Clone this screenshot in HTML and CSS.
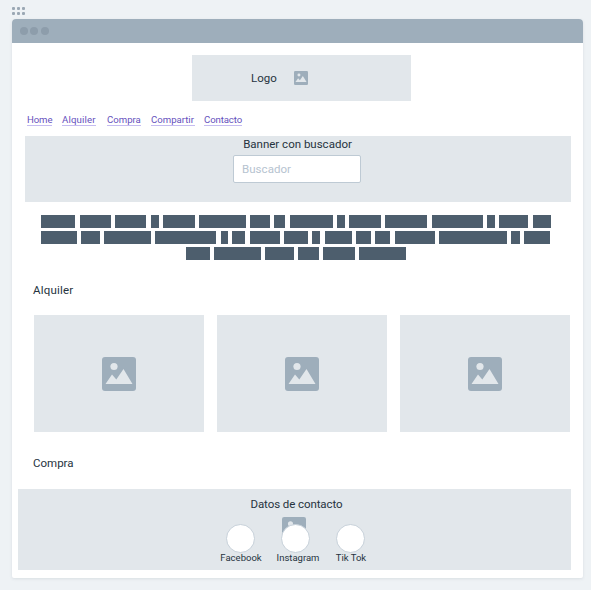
FILE: index.html
```html
<!DOCTYPE html>
<html lang="es">
<head>
<meta charset="utf-8">
<title>Wireframe</title>
<link rel="stylesheet" href="styles.css">
</head>
<body>
<svg class="defs" width="0" height="0" aria-hidden="true">
  <symbol id="picture" viewBox="0 0 34 34">
    <rect width="34" height="34" rx="3" fill="#9eaebb"/>
    <circle cx="12" cy="9.5" r="3.6" fill="#e2e7eb"/>
    <path d="M3.5 27 10 17.5l4.3 5L21.500 12 30.500 27z" fill="#e2e7eb"/>
  </symbol>
</svg>
<div class="grip"><i></i><i></i><i></i><i></i><i></i><i></i></div>
<main class="window">
  <header class="titlebar"><i></i><i></i><i></i></header>
  <section class="logo"><span>Logo</span><svg class="logo-icon"><use href="#picture"/></svg></section>
  <nav class="nav"><a class="home">Home</a><a class="rent">Alquiler</a><a class="buy">Compra</a><a class="share">Compartir</a><a class="reach">Contacto</a></nav>
  <section class="banner">
    <h1>Banner con buscador</h1>
    <div class="search">Buscador</div>
  </section>
  <section class="copy">
    <div class="line"><i style="width:34px"></i><i style="width:31px"></i><i style="width:31.5px"></i><i style="width:8px"></i><i style="width:32px"></i><i style="width:46.5px"></i><i style="width:20px"></i><i style="width:11px"></i><i style="width:43px"></i><i style="width:8px"></i><i style="width:31.5px"></i><i style="width:42px"></i><i style="width:51px"></i><i style="width:8px"></i><i style="width:29px"></i><i style="width:18px"></i></div>
    <div class="line"><i style="width:36px"></i><i style="width:18.3px"></i><i style="width:46.7px"></i><i style="width:61.3px"></i><i style="width:7.7px"></i><i style="width:13px"></i><i style="width:30.3px"></i><i style="width:23.7px"></i><i style="width:8px"></i><i style="width:27.7px"></i><i style="width:14.7px"></i><i style="width:15px"></i><i style="width:40.3px"></i><i style="width:67.7px"></i><i style="width:8.3px"></i><i style="width:26.7px"></i></div>
    <div class="line last"><i style="width:24px"></i><i style="width:46.3px"></i><i style="width:29px"></i><i style="width:21px"></i><i style="width:31.7px"></i><i style="width:47px"></i></div>
  </section>
  <h2 class="rent-title">Alquiler</h2>
  <section class="cards">
    <div class="card"><svg><use href="#picture"/></svg></div>
    <div class="card"><svg><use href="#picture"/></svg></div>
    <div class="card"><svg><use href="#picture"/></svg></div>
  </section>
  <h2 class="buy-title">Compra</h2>
  <footer class="contact">
    <h3>Datos de contacto</h3>
    <svg class="contact-icon"><use href="#picture"/></svg>
    <div class="socials">
      <div class="social"><i></i><span class="fb">Facebook</span></div>
      <div class="social"><i></i><span class="ig">Instagram</span></div>
      <div class="social"><i></i><span class="tt">Tik Tok</span></div>
    </div>
  </footer>
</main>
</body>
</html>
```
FILE: styles.css
```css
* { box-sizing: border-box; }
body {
  margin: 0;
  height: 590px;
  overflow: hidden;
  background: #eef2f5;
  color: #263340;
  font-family: Roboto, "Liberation Sans", sans-serif;
  font-size: 11.5px;
  padding-top: 7px;
}
h1, h2, h3 { margin: 0; font-size: 11.5px; font-weight: 400; line-height: 16px; }
svg { display: block; }
.defs { position: absolute; }
.grip {
  display: grid;
  grid-template-columns: repeat(3, 3px);
  gap: 2px;
  width: 13px;
  height: 8px;
  margin-left: 12px;
}
.grip i { width: 3px; height: 3px; border-radius: 1px; background: #9ba8b4; }
.window {
  width: 571.5px;
  height: 559px;
  margin: 4px 0 0 11.5px;
  background: #fff;
  border-radius: 4px 4px 2px 2px;
  box-shadow: 0 1px 3px rgba(70, 90, 110, .12);
}
.titlebar {
  display: flex;
  align-items: center;
  gap: 2.500px;
  height: 24px;
  padding-left: 8px;
  background: #9eaebb;
  border-radius: 4px 4px 0 0;
}
.titlebar i { width: 8px; height: 8px; border-radius: 50%; background: #8d9dab; }
.logo {
  display: flex;
  align-items: center;
  width: 219px;
  height: 46px;
  margin: 12px 0 0 180.500px;
  padding-left: 59px;
  background: #e2e7eb;
}
.logo span { width: 43px; font-size: 11.5px; }
.logo-icon { width: 14px; height: 14px; margin-top: -1px; }
.nav {
  display: flex;
  height: 12px;
  margin: 13px 0 0 15.500px;
  color: #6550bd;
  font-size: 9.6px;
  line-height: 11px;
}
.nav a { height: 12px; border-bottom: 1px solid #c5bcf0; white-space: nowrap; }
.nav .home { width: 25px; margin-right: 10px; letter-spacing: -.1px; }
.nav .rent { width: 34px; margin-right: 11px; letter-spacing: .15px; }
.nav .buy { width: 33.500px; margin-right: 10.500px; }
.nav .share { width: 43.500px; margin-right: 9.500px; }
.nav .reach { width: 37.500px; letter-spacing: -.1px; }
.banner {
  width: 546px;
  height: 66px;
  margin: 10px 0 0 13.500px;
  background: #e2e7eb;
  text-align: center;
}
.banner h1 { height: 17px; padding-right: 1px; }
.search {
  width: 128px;
  height: 28px;
  margin: 2px 0 0 208px;
  padding-left: 8px;
  border: 1px solid #becad4;
  border-radius: 2px;
  background: #fff;
  color: #b6c3d0;
  line-height: 26px;
  text-align: left;
  letter-spacing: .05px;
}
.copy {
  display: grid;
  gap: 3px;
  width: 509.500px;
  margin: 13px 0 0 29.700px;
}
.line { display: flex; justify-content: space-between; height: 13px; }
.line i { background: #4d5e6d; }
.line.last { justify-content: flex-start; gap: 4.100px; margin-left: 145px; }
h2 { margin-left: 21.500px; }
h2.rent-title { margin-top: 22px; letter-spacing: .2px; }
.cards { display: flex; gap: 12.500px; margin: 17px 0 0 22px; }
.card {
  display: flex;
  align-items: center;
  justify-content: center;
  width: 170.500px;
  height: 117px;
  background: #e2e7eb;
}
.card svg { width: 34px; height: 34px; }
.buy-title { margin-top: 23px; }
.contact {
  position: relative;
  width: 553px;
  height: 81px;
  margin: 18px 0 0 6px;
  padding-top: 7px;
  background: #e2e7eb;
}
.contact h3 { margin-left: 5px; text-align: center; letter-spacing: -.08px; }
.contact-icon { position: absolute; left: 264px; top: 28px; width: 24px; height: 24px; }
.socials { position: relative; display: flex; width: 165px; margin: 12px 0 0 195.500px; }
.social { display: flex; flex-direction: column; align-items: center; width: 55px; }
.social i {
  width: 29px;
  height: 29px;
  border: 1px solid #c6d0d9;
  border-radius: 50%;
  background: #fff;
}
.social span { font-size: 9.5px; line-height: 10px; white-space: nowrap; }
.social .ig { padding-left: 5px; }
.social .fb, .social .tt { padding-left: 1px; }
```
